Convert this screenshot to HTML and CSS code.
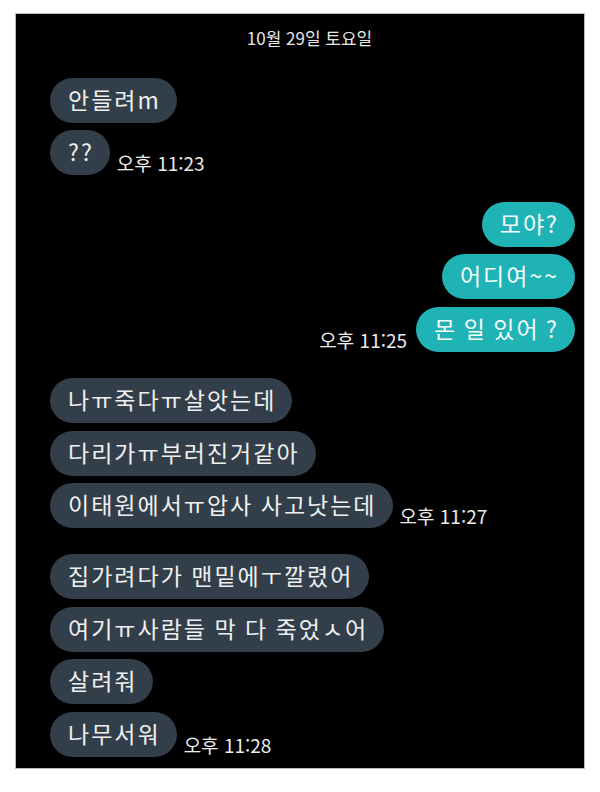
FILE: index.html
```html
<!DOCTYPE html>
<html lang="ko">
<head>
    <meta charset="UTF-8">
    <meta name="viewport" content="width=device-width, initial-scale=1.0">
    <title>메시지</title>
    <link rel="stylesheet" href="styles.css">
</head>
<body>
    <div class="screen">
        <div class="date">10월 29일 토요일</div>

        <div class="group">
            <div class="row">
                <div class="bubble">안들려m</div>
            </div>
            <div class="row">
                <div class="bubble">??</div>
                <span class="time">오후 11:23</span>
            </div>
        </div>

        <div class="group mine">
            <div class="row">
                <div class="bubble">모야?</div>
            </div>
            <div class="row">
                <div class="bubble">어디여~~</div>
            </div>
            <div class="row">
                <span class="time">오후 11:25</span>
                <div class="bubble">몬 일 있어 ?</div>
            </div>
        </div>

        <div class="group">
            <div class="row">
                <div class="bubble">나ㅠ죽다ㅠ살앗는데</div>
            </div>
            <div class="row">
                <div class="bubble">다리가ㅠ부러진거같아</div>
            </div>
            <div class="row">
                <div class="bubble">이태원에서ㅠ압사 사고낫는데</div>
                <span class="time">오후 11:27</span>
            </div>
        </div>

        <div class="group">
            <div class="row">
                <div class="bubble">집가려다가 맨밑에ㅜ깔렸어</div>
            </div>
            <div class="row">
                <div class="bubble">여기ㅠ사람들 막 다 죽었ㅅ어</div>
            </div>
            <div class="row">
                <div class="bubble">살려줘</div>
            </div>
            <div class="row">
                <div class="bubble">나무서워</div>
                <span class="time">오후 11:28</span>
            </div>
        </div>
    </div>
</body>
</html>
```

FILE: styles.css
```css
body {
    margin: 0;
    padding: 0;
    background: #fff;
    font-family: "Noto Sans CJK KR", "Noto Sans", sans-serif;
}
.screen {
    box-sizing: border-box;
    width: 570px;
    height: 756px;
    margin: 13px 0 0 15px;
    padding: 14px 9px 0 34px;
    background: #000;
    border: 1px solid #b8b8b8;
    display: flex;
    flex-direction: column;
    gap: 26.3px;
}
.date {
    color: #e6e6e6;
    font-size: 17px;
    line-height: 20px;
    text-align: center;
    padding-right: 6px;
    margin-bottom: 3.7px;
}
.group {
    display: flex;
    flex-direction: column;
    gap: 7.5px;
}
.row {
    display: flex;
    align-items: flex-end;
    gap: 7px;
}
.mine .row {
    justify-content: flex-end;
    gap: 9px;
}
.bubble {
    background: #323f4a;
    color: #f0f0f0;
    font-size: 23px;
    line-height: 27px;
    letter-spacing: 2px;
    word-spacing: -1px;
    padding: 8px 16px 10px 18px;
    border-radius: 23px;
    white-space: nowrap;
}
.mine .bubble {
    background: #20b3b5;
    color: #f6fcfc;
    word-spacing: -2px;
}
.time {
    color: #ececec;
    font-size: 19px;
    line-height: 25px;
    white-space: nowrap;
}
```
